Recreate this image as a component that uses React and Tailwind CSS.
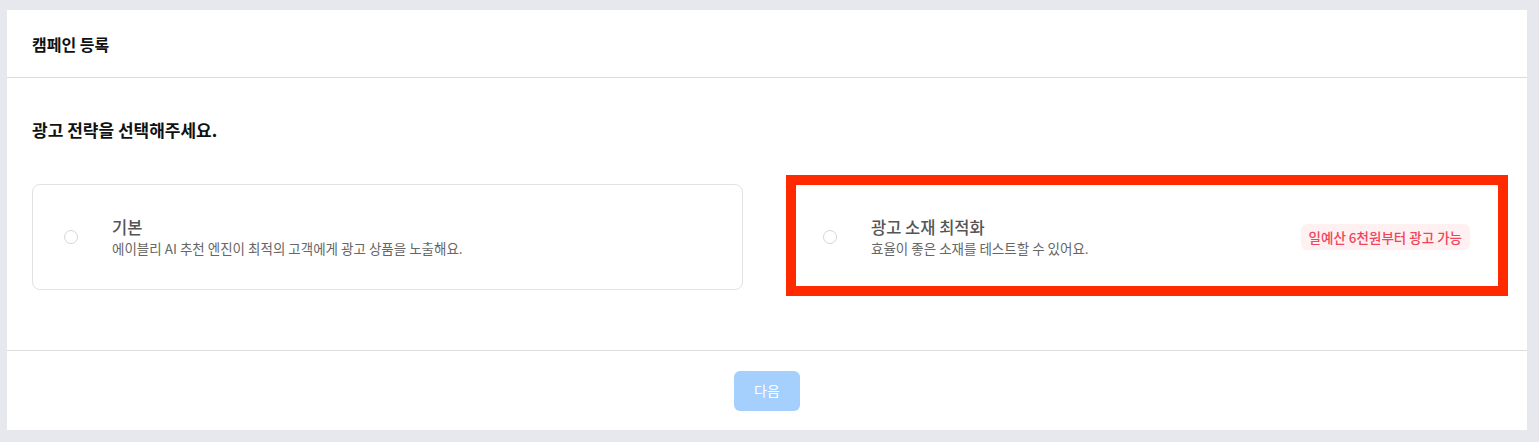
import React, { useState } from "react";

const options = [
  {
    id: "basic",
    title: "기본",
    desc: "에이블리 AI 추천 엔진이 최적의 고객에게 광고 상품을 노출해요.",
  },
  {
    id: "creative",
    title: "광고 소재 최적화",
    desc: "효율이 좋은 소재를 테스트할 수 있어요.",
    badge: "일예산 6천원부터 광고 가능",
    highlight: true,
  },
];

export default function App() {
  const [selected, setSelected] = useState(null);

  return (
    <div
      className="w-full h-[442px] bg-[#e6e8ee] pt-[10px] pl-[7px] pr-[12px]"
      style={{ fontFamily: '"Noto Sans CJK KR", "Noto Sans", sans-serif' }}
    >
      <div className="bg-white h-[420px] flex flex-col">
        {/* Header */}
        <div className="h-[68px] flex items-center px-[25px] border-b border-[#dcdcdc]">
          <h1 className="text-[16px] font-bold text-[#111]">캠페인 등록</h1>
        </div>

        {/* Body */}
        <div className="px-[25px] pt-[40px] h-[273px] border-b border-[#dcdcdc]">
          <h2 className="text-[17px] font-bold text-[#111] leading-[24px]">
            광고 전략을 선택해주세요.
          </h2>
          <div className="grid grid-cols-2 gap-[48px] mt-[42px]">
            {options.map((o) => (
              <div
                key={o.id}
                onClick={() => setSelected(o.id)}
                className="relative h-[106px] rounded-lg border border-[#e2e2e2] flex items-center pl-[31px] pr-[31px] cursor-pointer"
              >
                <span
                  className={
                    selected === o.id
                      ? "w-[14px] h-[14px] rounded-full border-4 border-[#3b8ef6] shrink-0"
                      : "w-[14px] h-[14px] rounded-full border border-[#d6d6d6] shrink-0"
                  }
                />
                <div className="ml-[34px] flex-1">
                  <div className="text-[16.5px] font-medium text-[#555] leading-[22px]">
                    {o.title}
                  </div>
                  <div className="text-[13.5px] text-[#666] leading-[20px]">{o.desc}</div>
                </div>
                {o.badge && (
                  <span className="bg-[#fff0f2] text-[#f0445a] text-[13.5px] font-medium rounded-md px-[8px] py-[3px] leading-[20px]">
                    {o.badge}
                  </span>
                )}
                {o.highlight && (
                  <span className="absolute -left-[6px] -right-[7px] -top-[10px] -bottom-[7px] border-[10px] border-[#ff2a00] pointer-events-none" />
                )}
              </div>
            ))}
          </div>
        </div>

        {/* Footer */}
        <div className="flex-1 flex items-center justify-center">
          <button className="w-[66px] h-[40px] rounded-md bg-[#a5cffc] text-white text-[14px]">
            다음
          </button>
        </div>
      </div>
    </div>
  );
}
